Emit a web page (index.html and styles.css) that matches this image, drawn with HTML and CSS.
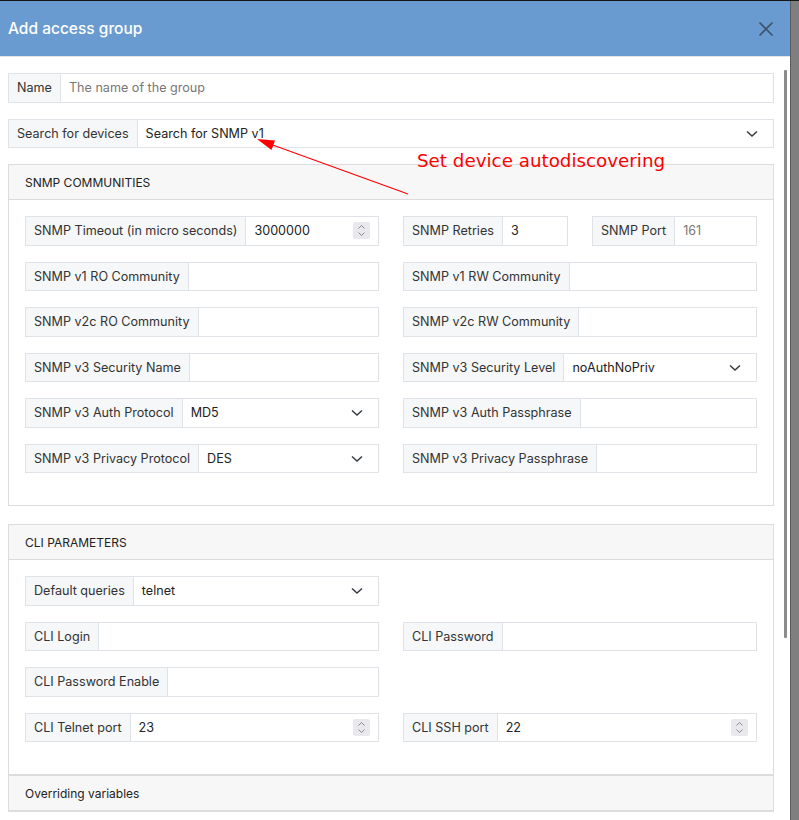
FILE: index.html
```html
<!DOCTYPE html>
<html lang="en">
<head>
    <meta charset="UTF-8">
    <meta name="viewport" content="width=device-width, initial-scale=1.0">
    <title>Add access group</title>
    <link rel="stylesheet" href="styles.css">
</head>
<body>
<div class="screen">
    <div class="modal">
        <div class="modal-header">
            <h1>Add access group</h1>
            <svg class="close" width="16" height="16" viewBox="0 0 16 16"><path d="M1.5 1.5 L14.5 14.5 M14.5 1.5 L1.5 14.5" stroke="#3f5268" stroke-width="1.6" fill="none"/></svg>
        </div>

        <div class="modal-body">
            <div class="group">
                <span class="group-label">Name</span>
                <span class="control placeholder">The name of the group</span>
            </div>
            <div class="group">
                <span class="group-label">Search for devices</span>
                <span class="control select">Search for SNMP v1</span>
            </div>

            <div class="card">
                <div class="card-header">SNMP COMMUNITIES</div>
                <div class="card-body grid">
                    <div class="group">
                        <span class="group-label">SNMP Timeout (in micro seconds)</span>
                        <span class="control number">3000000</span>
                    </div>
                    <div class="pair">
                        <div class="group">
                            <span class="group-label">SNMP Retries</span>
                            <span class="control">3</span>
                        </div>
                        <div class="group">
                            <span class="group-label">SNMP Port</span>
                            <span class="control placeholder">161</span>
                        </div>
                    </div>
                    <div class="group">
                        <span class="group-label">SNMP v1 RO Community</span>
                        <span class="control"></span>
                    </div>
                    <div class="group">
                        <span class="group-label">SNMP v1 RW Community</span>
                        <span class="control"></span>
                    </div>
                    <div class="group">
                        <span class="group-label">SNMP v2c RO Community</span>
                        <span class="control"></span>
                    </div>
                    <div class="group">
                        <span class="group-label">SNMP v2c RW Community</span>
                        <span class="control"></span>
                    </div>
                    <div class="group">
                        <span class="group-label">SNMP v3 Security Name</span>
                        <span class="control"></span>
                    </div>
                    <div class="group">
                        <span class="group-label">SNMP v3 Security Level</span>
                        <span class="control select">noAuthNoPriv</span>
                    </div>
                    <div class="group">
                        <span class="group-label">SNMP v3 Auth Protocol</span>
                        <span class="control select">MD5</span>
                    </div>
                    <div class="group">
                        <span class="group-label">SNMP v3 Auth Passphrase</span>
                        <span class="control"></span>
                    </div>
                    <div class="group">
                        <span class="group-label">SNMP v3 Privacy Protocol</span>
                        <span class="control select">DES</span>
                    </div>
                    <div class="group">
                        <span class="group-label">SNMP v3 Privacy Passphrase</span>
                        <span class="control"></span>
                    </div>
                </div>
            </div>

            <div class="card card-joined">
                <div class="card-header">CLI PARAMETERS</div>
                <div class="card-body grid">
                    <div class="group">
                        <span class="group-label">Default queries</span>
                        <span class="control select">telnet</span>
                    </div>
                    <div></div>
                    <div class="group">
                        <span class="group-label">CLI Login</span>
                        <span class="control"></span>
                    </div>
                    <div class="group">
                        <span class="group-label">CLI Password</span>
                        <span class="control"></span>
                    </div>
                    <div class="group">
                        <span class="group-label">CLI Password Enable</span>
                        <span class="control"></span>
                    </div>
                    <div></div>
                    <div class="group">
                        <span class="group-label">CLI Telnet port</span>
                        <span class="control number">23</span>
                    </div>
                    <div class="group">
                        <span class="group-label">CLI SSH port</span>
                        <span class="control number">22</span>
                    </div>
                </div>
            </div>

            <div class="card">
                <div class="card-header normal">Overriding variables</div>
            </div>
        </div>

        <div class="scrollbar"></div>
    </div>
    <div class="backdrop"></div>

    <!-- annotation drawn over the screenshot -->
    <div class="note">Set device autodiscovering</div>
    <svg class="arrow" width="799" height="820" viewBox="0 0 799 820">
        <line x1="408" y1="194" x2="270" y2="144" stroke="#ff0000" stroke-width="1.2"/>
        <polygon points="257,139 271.5,150 275,140.5" fill="#ff0000"/>
    </svg>
</div>

<script>
    // chevrons and spinners for the fake controls
    document.querySelectorAll('.control.select').forEach(function (el) {
        el.insertAdjacentHTML('beforeend',
            '<svg class="chevron" width="12" height="8" viewBox="0 0 12 8"><path d="M1 1.5 L6 6 L11 1.5" stroke="#343a40" stroke-width="1.5" fill="none"/></svg>');
    });
    document.querySelectorAll('.control.number').forEach(function (el) {
        el.insertAdjacentHTML('beforeend',
            '<span class="spin"><svg width="9" height="13" viewBox="0 0 9 13"><path d="M1.5 4.5 L4.5 1.5 L7.5 4.5 M1.5 8.5 L4.5 11.5 L7.5 8.5" stroke="#8a8a8a" stroke-width="1" fill="none"/></svg></span>');
    });
</script>
</body>
</html>
```

FILE: styles.css
```css
* {
    box-sizing: border-box;
}
body {
    margin: 0;
    font-family: Inter, "Noto Sans", sans-serif;
    font-size: 12.6px;
    color: #333;
    background: #7f7f7f;
    overflow: hidden;
}
.screen {
    display: flex;
    height: 820px;
    border-top: 1px solid #151515;
    position: relative;
}
.modal {
    width: 790px;
    background: #fff;
    position: relative;
    overflow: hidden;
}
.backdrop {
    flex: 1;
    background: #7f7f7f;
    border-left: 1px solid #5c5c5c;
}
.modal-header {
    height: 56px;
    background: #6a9bd0;
    border-bottom: 1px solid #e4e4e4;
    display: flex;
    align-items: center;
    justify-content: space-between;
    padding: 0 16px 0 8px;
}
.modal-header h1 {
    margin: 0;
    color: #fff;
    font-size: 15.5px;
    font-weight: 500;
}
.modal-body {
    padding: 16px 16px 0 8px;
}
.group {
    display: flex;
    height: 29.5px;
    border: 1px solid #dfe2e6;
    margin-bottom: 16px;
}
.group-label {
    background: #f5f7f9;
    border-right: 1px solid #dfe2e6;
    padding: 0 8px;
    display: flex;
    align-items: center;
    white-space: nowrap;
}
.control {
    flex: 1;
    position: relative;
    display: flex;
    align-items: center;
    padding: 0 8px;
    color: #222;
}
.placeholder {
    color: #777;
}
.chevron {
    position: absolute;
    right: 15px;
    top: 10px;
}
.spin {
    position: absolute;
    right: 8px;
    top: 5px;
    width: 17px;
    height: 17px;
    background: #e9e9ed;
    border-radius: 2px;
    display: flex;
    align-items: center;
    justify-content: center;
}
.card {
    border: 1px solid #dcdcdc;
    margin-bottom: 18px;
}
.card-joined {
    margin-bottom: 0;
}
.card-header {
    height: 35px;
    background: #f7f7f7;
    border-bottom: 1px solid #dcdcdc;
    padding: 0 16px;
    display: flex;
    align-items: center;
    font-size: 12px;
    color: #222;
}
.card-body {
    padding: 16px 16px 16px;
}
.grid {
    display: grid;
    grid-template-columns: 1fr 1fr;
    column-gap: 24px;
}
.pair {
    display: grid;
    grid-template-columns: 1fr 1fr;
    column-gap: 24px;
}
.scrollbar {
    position: absolute;
    left: 784px;
    top: 69px;
    width: 3px;
    height: 568px;
    background: #8c8c8c;
    border-radius: 1px;
}
.note {
    position: absolute;
    left: 417px;
    top: 149px;
    color: #ff0000;
    font-family: "DejaVu Sans", sans-serif;
    font-size: 18.3px;
}
.arrow {
    position: absolute;
    left: 0;
    top: -1px;
    pointer-events: none;
}
```
